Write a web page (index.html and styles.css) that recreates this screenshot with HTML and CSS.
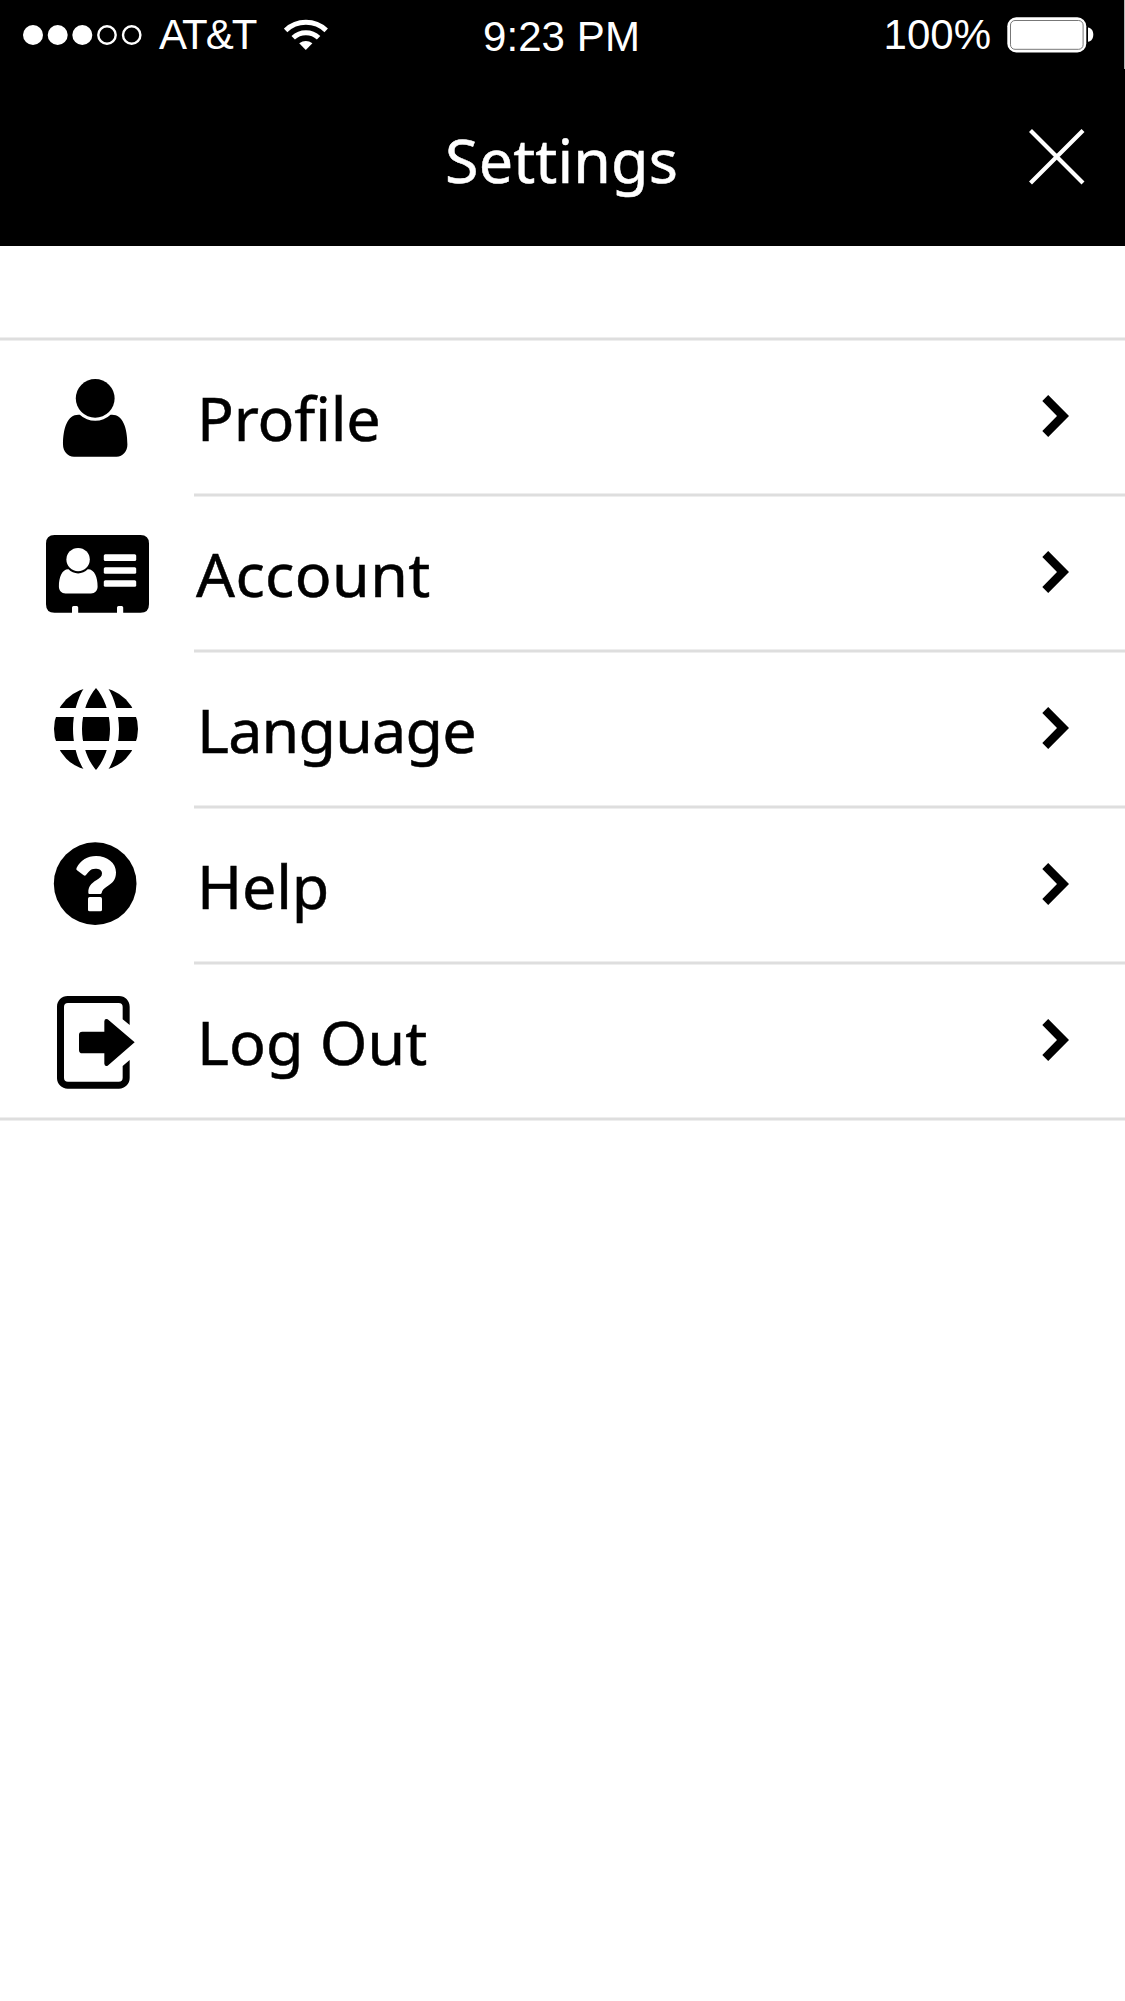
FILE: index.html
```html
<!DOCTYPE html>
<html lang="en">
<head>
<meta charset="utf-8">
<title>Settings</title>
<link rel="stylesheet" href="styles.css">
</head>
<body>
<header class="header">
  <div class="status">
    <div class="status-left">
      <svg class="signal" width="122" height="24" viewBox="0 0 122 24" fill="#fff">
        <circle cx="12" cy="12" r="10"/><circle cx="36.7" cy="12" r="10"/><circle cx="61.3" cy="12" r="10"/>
        <g fill="none" stroke="#fff" stroke-width="2.4"><circle cx="86" cy="12" r="8.7"/><circle cx="110.7" cy="12" r="8.7"/></g>
      </svg>
      <span class="carrier">AT&amp;T</span>
      <svg class="wifi" width="44" height="32" viewBox="0 0 44 32" fill="none" stroke="#fff">
        <path d="M1.6 11.4A29.5 29.5 0 0 1 42.2 11.4" stroke-width="5"/>
        <path d="M9.2 18.8A18.5 18.5 0 0 1 34.6 18.8" stroke-width="5"/>
        <path d="M21.8 31L15.2 24.3Q21.8 19.7 28.4 24.3Z" fill="#fff" stroke="none"/>
      </svg>
    </div>
    <span class="time">9:23 PM</span>
    <div class="status-right">
      <span class="percent">100%</span>
      <svg class="battery" width="87" height="36" viewBox="0 0 87 36">
        <rect x="0.3" y="0.3" width="79" height="35.2" rx="9" fill="#fff"/>
        <rect x="3.5" y="3.5" width="72.6" height="28.8" rx="4.5" fill="none" stroke="#777" stroke-width="1"/>
        <path d="M81 10.6C84.3 11 86.3 14 86.3 17.7S84.3 24.4 81 24.8Z" fill="#fff"/>
      </svg>
    </div>
  </div>
  <div class="titlebar">
    <h1 class="title">Settings</h1>
    <svg class="close" width="56" height="56" viewBox="0 0 56 56" stroke="#fff" stroke-width="4.2"><path d="M1.500 1.500L54 54M54 1.500L1.500 54"/></svg>
  </div>
</header>
<main class="list">
  <a class="row">
    <svg class="icon" viewBox="0 0 194 156">
      <circle cx="95.2" cy="61.4" r="19.4"/>
      <path d="M79.8 77.7A22.6 22.6 0 0 0 110.6 77.7C122.5 76.5 127.4 90 127.4 107.5C127.4 114 123 119.7 116.5 119.7H74C67.500 119.7 63 114 63 107.5C63 90 68 76.5 79.8 77.7Z"/>
    </svg>
    <span class="label profile">Profile</span>
    <svg class="chevron" viewBox="0 0 27 42"><path d="M6.200 0L27 21L6.200 42L0.300 36L15 21L0.300 6Z"/></svg>
  </a>
  <a class="row">
    <svg class="icon" viewBox="0 2 194 156">
      <path d="M54.500 44H140.500Q149 44 149 52.500V113.300Q149 121.800 140.500 121.800H123.200V116.500Q123.200 115 121.700 115H118.500Q117 115 117 116.500V121.800H78.200V116.500Q78.200 115 76.700 115H73.500Q72 115 72 116.500V121.800H54.500Q46 121.800 46 113.300V52.500Q46 44 54.500 44Z"/>
      <g fill="#fff">
        <circle cx="78.100" cy="68.600" r="11.700"/>
        <path d="M68.500 78.200A13 13 0 0 0 87.700 78.200C94.500 78 97.600 86 97.600 95.500C97.600 99.500 95 102.400 91 102.400H65.500C61.500 102.400 58.900 99.500 58.900 95.500C58.900 86 62 78 68.500 78.200Z"/>
        <rect x="103.800" y="63.300" width="32.400" height="6.600" rx="1.500"/>
        <rect x="103.800" y="76.200" width="32.400" height="6.600" rx="1.500"/>
        <rect x="103.800" y="89.200" width="32.400" height="6.600" rx="1.500"/>
      </g>
    </svg>
    <span class="label account">Account</span>
    <svg class="chevron" viewBox="0 0 27 42"><path d="M6.200 0L27 21L6.200 42L0.300 36L15 21L0.300 6Z"/></svg>
  </a>
  <a class="row">
    <svg class="icon" viewBox="0 0 194 156">
      <circle cx="96" cy="80" r="42"/>
      <g fill="#fff">
        <path id="meridian" d="M96 36V39C103 47 110 62 110 80C110 98 103 113 96 121V124H108V121C114.500 111 119 95 119 80C119 65 114.500 49 108 39V36Z"/>
        <use href="#meridian" transform="translate(192 0) scale(-1 1)"/>
        <rect x="50" y="59" width="92" height="9"/>
        <rect x="50" y="92" width="92" height="9"/>
      </g>
    </svg>
    <span class="label language">Language</span>
    <svg class="chevron" viewBox="0 0 27 42"><path d="M6.200 0L27 21L6.200 42L0.300 36L15 21L0.300 6Z"/></svg>
  </a>
  <a class="row">
    <svg class="icon" viewBox="0 0 194 156">
      <g transform="translate(0 -5) scale(.33333)">
        <circle cx="285.500" cy="251" r="124"/>
        <path fill="#fff" d="M230 203C242 181 262 168 288 168C322 168 348 189 348 217C348 240 337 250 322 259C311 266 306 272 305 279Q304 282 301 282H268Q265 282 265 278C265 260 272 251 290 240C300 234 306 230 306 220C306 210 297 206 286 206C270 206 265 217 258 225Q255 229 251 226L231 211Q227 208 230 203Z"/>
        <rect fill="#fff" x="264" y="291" width="42" height="43" rx="5"/>
      </g>
    </svg>
    <span class="label help">Help</span>
    <svg class="chevron" viewBox="0 0 27 42"><path d="M6.200 0L27 21L6.200 42L0.300 36L15 21L0.300 6Z"/></svg>
  </a>
  <a class="row last">
    <svg class="icon" viewBox="0 0 194 156">
      <g transform="translate(0 -1) scale(.33333)">
        <path d="M203 108H357C375 108 389 122 389 140V195L368 178V141Q368 129 356 129H204Q192 129 192 141V353Q192 365 204 365H356Q368 365 368 353V318L389 300V354C389 372 375 386 357 386H203C185 386 171 372 171 354V140C171 122 185 108 203 108Z"/>
        <path d="M247 215H313V184Q314 174 323 178L404 247L323 317Q314 320 313 311V280H247Q237 280 237 270V225Q237 215 247 215Z"/>
      </g>
    </svg>
    <span class="label logout">Log Out</span>
    <svg class="chevron" viewBox="0 0 27 42"><path d="M6.200 0L27 21L6.200 42L0.300 36L15 21L0.300 6Z"/></svg>
  </a>
</main>
</body>
</html>
```
FILE: styles.css
```css
* { box-sizing: border-box; }
html, body { margin: 0; background: #fff; }
body {
  width: 1125px;
  height: 2001px;
  overflow: hidden;
  font-family: "Noto Sans", sans-serif;
}
svg { display: block; flex: none; }
.header { height: 246px; background: #000; color: #fff; }
.status {
  display: grid;
  grid-template-columns: 1fr auto 1fr;
  height: 69px;
  padding: 0 30px 0 21px;
  border-right: 1px solid #b5b5b5;
  font: 42px/48px "Liberation Sans", Arial, sans-serif;
  white-space: nowrap;
}
.status-left, .status-right { display: flex; align-items: flex-start; }
.status-right { justify-content: flex-end; }
.signal { margin-top: 23px; }
.carrier { width: 100px; margin: 11px 0 0 16px; letter-spacing: -1.9px; }
.wifi { margin: 19px 0 0 25px; }
.time { margin: 13px 0 0 8px; letter-spacing: 0.1px; }
.percent { margin: 11px 16px 0 0; }
.battery { margin-top: 17px; }
.titlebar {
  display: grid;
  grid-template-columns: 1fr auto 1fr;
  height: 177px;
  padding: 0 41px 0 39px;
}
.title {
  grid-column: 2;
  margin: 49px 0 0;
  font-size: 61px;
  font-weight: 400;
  line-height: 84px;
  letter-spacing: 0.1px;
  -webkit-text-stroke: 0.5px currentColor;
}
.close { justify-self: end; margin: 60px -1px 0 0; }
.list { margin-top: 91px; }
.row {
  display: flex;
  align-items: flex-start;
  height: 156px;
  background: linear-gradient(#eee 1px, #dedede 1px 3px, #eee 3px) 194px 0 / 100% 4px no-repeat;
}
.row:first-child { background-position: 0 0; }
.row.last {
  height: 160px;
  background:
    linear-gradient(#eee 1px, #dedede 1px 3px, #eee 3px) 194px 0 / 100% 4px no-repeat,
    linear-gradient(#eee 1px, #dedede 1px 3px, #eee 3px) 0 156px / 100% 4px no-repeat;
}
.icon { width: 194px; height: 156px; }
.label {
  flex: 1;
  margin: 39px 0 0 3px;
  font-size: 61px;
  font-weight: 400;
  line-height: 84px;
  white-space: nowrap;
  -webkit-text-stroke: 0.5px currentColor;
}
.profile { letter-spacing: -0.15px; }
.account { margin-left: 2px; letter-spacing: 0.4px; }
.language { letter-spacing: -0.8px; }
.help { letter-spacing: -0.2px; }
.logout { letter-spacing: 0.1px; }
.chevron { width: 27px; height: 42px; margin: 58px 56px 0 0; }
```
